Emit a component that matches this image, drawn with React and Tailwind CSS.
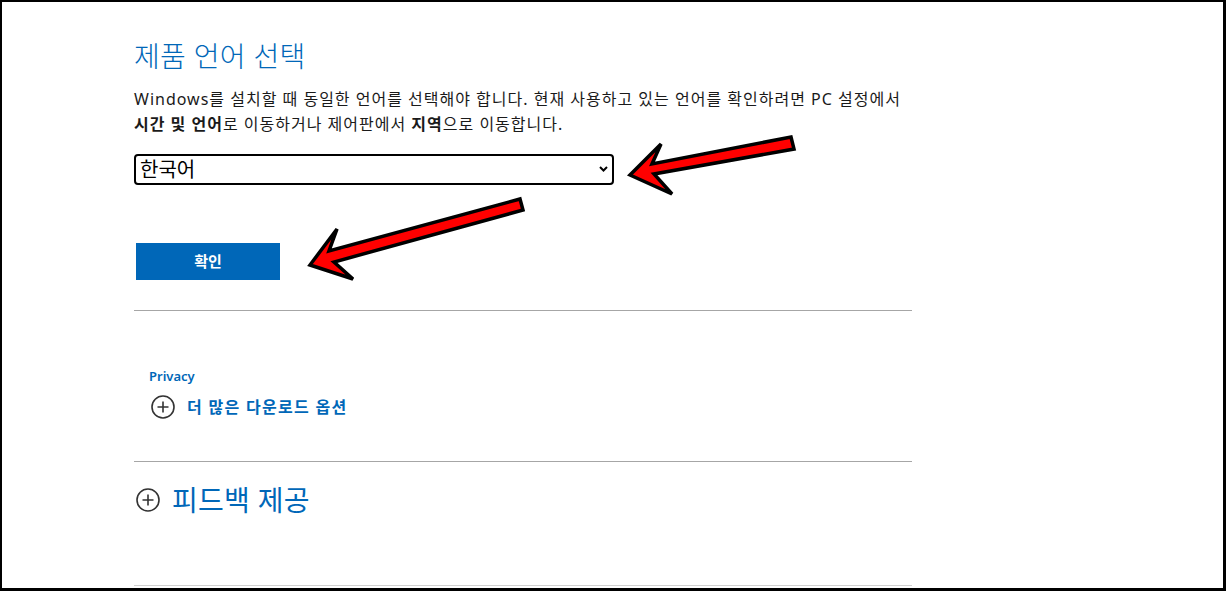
import React from "react";

function PlusCircle({ className }) {
  return (
    <svg viewBox="0 0 24 24" className={className} fill="none" stroke="#333" strokeWidth="1.6">
      <circle cx="12" cy="12" r="11" />
      <path d="M12 6.5v11M6.5 12h11" />
    </svg>
  );
}

export default function App() {
  const font = { fontFamily: '"Noto Sans", "Noto Sans CJK KR", sans-serif' };
  return (
    <div className="relative w-[1226px] h-[591px] bg-white border-t-2 border-l-2 border-r-[3px] border-b-[3px] border-black overflow-hidden" style={font}>
      <div className="ml-[132px] w-[778px] pt-[35px]">
        <h1 className="text-[28px] leading-[38px] font-light text-[#0067b8] tracking-[0.3px]">제품 언어 선택</h1>
        <p className="mt-[12px] text-[16px] leading-[25px] text-[#1a1a1a] tracking-[1px]">
          Windows를 설치할 때 동일한 언어를 선택해야 합니다. 현재 사용하고 있는 언어를 확인하려면 PC 설정에서
          <br />
          <b>시간 및 언어</b>로 이동하거나 제어판에서 <b>지역</b>으로 이동합니다.
        </p>
        <div className="relative mt-[17px] w-[480px]">
          <select className="appearance-none w-full h-[31px] border-2 border-black rounded-[4px] pl-[4px] text-[20px] leading-[27px] text-black bg-white" style={font} defaultValue="ko">
            <option value="ko">한국어</option>
          </select>
          <svg className="absolute right-[6px] top-[12px] w-[9px] h-[6px] pointer-events-none" viewBox="0 0 9 6" fill="none" stroke="#000" strokeWidth="2">
            <path d="M1 1l3.5 3.5L8 1" />
          </svg>
        </div>
        <button className="mt-[58px] ml-[2px] w-[144px] h-[37px] bg-[#0067b8] text-white text-[15px] font-bold">확인</button>
        <div className="mt-[30px] h-px bg-[#a6a6a6]" />
        <div className="pl-[15px] pt-[56px]">
          <div className="text-[13px] leading-[18px] font-semibold text-[#0067b8]">Privacy</div>
          <div className="mt-[10px] flex items-center gap-[12px] pl-[2px]">
            <PlusCircle className="w-[24px] h-[24px]" />
            <span className="text-[16px] font-semibold text-[#0067b8] tracking-[1.3px]">더 많은 다운로드 옵션</span>
          </div>
        </div>
        <div className="mt-[42px] h-px bg-[#a6a6a6]" />
        <div className="mt-[21px] flex items-center gap-[12px] pl-[2px]">
          <PlusCircle className="w-[24px] h-[24px]" />
          <span className="text-[28px] leading-[34px] text-[#0067b8] tracking-[0.3px]">피드백 제공</span>
        </div>
        <div className="mt-[68px] h-px bg-[#d0d0d0]" />
      </div>
      <svg className="absolute left-0 top-0 pointer-events-none" width="1226" height="591" viewBox="-2 -2 1226 591">
        <path
          d="M787 133 L790 145 L650 170 L668 190 L626 171 L657 140 L648 160 Z"
          fill="#f00"
          stroke="#000"
          strokeWidth="3.5"
          strokeLinejoin="miter"
        />
        <path
          d="M516 195 L519 206 L330 258 L349 275 L306 261 L333 225 L325 247 Z"
          fill="#f00"
          stroke="#000"
          strokeWidth="3.5"
          strokeLinejoin="miter"
        />
      </svg>
    </div>
  );
}
